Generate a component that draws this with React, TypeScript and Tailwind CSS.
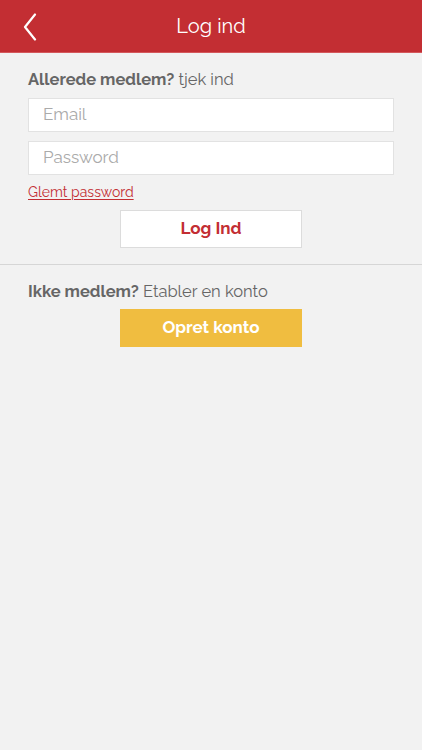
import React from "react";

export default function App() {
  const font = { fontFamily: "Raleway, Lato, 'Open Sans', sans-serif" };
  return (
    <div className="w-[422px] h-[750px] bg-[#f2f2f2] flex flex-col" style={font}>
      <div className="h-[53px] bg-[#c32e33] relative flex items-center justify-center border-b border-[#d4585c]">
        <svg className="absolute left-[22px] top-[13px]" width="16" height="28" viewBox="0 0 16 28" fill="none">
          <path d="M13 1.5 L3 14 L13 26.5" stroke="white" strokeWidth="2.2" strokeLinecap="round" strokeLinejoin="round" />
        </svg>
        <span className="text-white text-[20px] leading-none">Log ind</span>
      </div>
      <div className="px-[28px] pt-[16px] flex flex-col">
        <div className="text-[16.5px] leading-[20px] text-[#666]">
          <span className="font-bold">Allerede medlem?</span> tjek ind
        </div>
        <div className="mt-[9px] h-[34px] bg-white border border-[#e2e2e2] flex items-center pl-[14px] text-[17px] text-[#aaa]">Email</div>
        <div className="mt-[9px] h-[34px] bg-white border border-[#e2e2e2] flex items-center pl-[14px] text-[17px] text-[#aaa]">Password</div>
        <div className="mt-[8px] text-[14px] leading-[18px] text-[#c32e33] underline underline-offset-2 decoration-1">Glemt password</div>
        <div className="mt-[9px] self-center w-[182px] h-[38px] bg-white border border-[#dcdcdc] flex items-center justify-center text-[17px] font-bold text-[#c32e33]">Log Ind</div>
      </div>
      <div className="mt-[16px] h-px bg-[#d6d6d6]"></div>
      <div className="px-[28px] pt-[16px] flex flex-col">
        <div className="text-[16.5px] leading-[20px] text-[#666]">
          <span className="font-bold">Ikke medlem?</span> Etabler en konto
        </div>
        <div className="mt-[8px] self-center w-[182px] h-[38px] bg-[#f0bd40] flex items-center justify-center text-[17px] font-bold text-white">Opret konto</div>
      </div>
    </div>
  );
}
